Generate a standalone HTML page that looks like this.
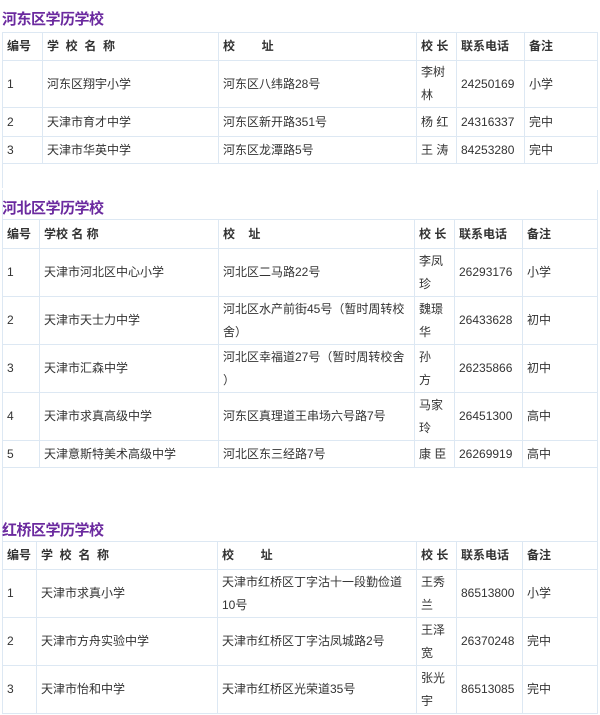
<!DOCTYPE html>
<html><head><meta charset="utf-8"><style>
body{margin:0;width:600px;height:715px;background:#fff;overflow:hidden;position:relative;font-family:"Liberation Sans","Noto Sans CJK SC",sans-serif;color:#333;font-size:12px}
.t{position:absolute;left:2px;font-size:15px;font-weight:bold;color:#6b2a9f;letter-spacing:-0.5px}
table{position:absolute;left:2px;width:596px;border-collapse:collapse;table-layout:fixed}
td{border:1px solid #dde8f3;padding:0 4px;vertical-align:middle;line-height:23px;font-size:12px;white-space:nowrap;overflow:hidden}
tr.h td{font-weight:bold}
.vl{position:absolute;width:1px;background:#dde8f3}
</style></head><body>
<div class="t" style="top:8px">河东区学历学校</div>
<table style="top:32px">
<colgroup><col style="width:40px"><col style="width:176px"><col style="width:198px"><col style="width:40px"><col style="width:68px"><col></colgroup>
<tr class="h" style="height:28px"><td>编号</td><td>学&nbsp; 校&nbsp; 名&nbsp; 称</td><td>校&nbsp; &nbsp; &nbsp; &nbsp; 址</td><td>校 长</td><td>联系电话</td><td>备注</td></tr>
<tr style="height:47px"><td>1</td><td>河东区翔宇小学</td><td>河东区八纬路28号</td><td>李树<br>林</td><td>24250169</td><td>小学</td></tr>
<tr style="height:29px"><td>2</td><td>天津市育才中学</td><td>河东区新开路351号</td><td>杨 红</td><td>24316337</td><td>完中</td></tr>
<tr style="height:27px"><td>3</td><td>天津市华英中学</td><td>河东区龙潭路5号</td><td>王 涛</td><td>84253280</td><td>完中</td></tr>
</table>
<div class="vl" style="left:2px;top:163px;height:25px"></div>
<div class="t" style="top:197px">河北区学历学校</div>
<div class="vl" style="left:2px;top:190px;height:30px"></div>
<div class="vl" style="left:597px;top:190px;height:30px"></div>
<table style="top:219px">
<colgroup><col style="width:37px"><col style="width:179px"><col style="width:196px"><col style="width:40px"><col style="width:68px"><col></colgroup>
<tr class="h" style="height:29px"><td>编号</td><td>学校 名 称</td><td>校&nbsp; &nbsp; 址</td><td>校 长</td><td>联系电话</td><td>备注</td></tr>
<tr style="height:48px"><td>1</td><td>天津市河北区中心小学</td><td>河北区二马路22号</td><td>李凤<br>珍</td><td>26293176</td><td>小学</td></tr>
<tr style="height:48px"><td>2</td><td>天津市天士力中学</td><td>河北区水产前街45号（暂时周转校<br>舍）</td><td>魏璟<br>华</td><td>26433628</td><td>初中</td></tr>
<tr style="height:48px"><td>3</td><td>天津市汇森中学</td><td>河北区幸福道27号（暂时周转校舍<br>）</td><td>孙<br>方</td><td>26235866</td><td>初中</td></tr>
<tr style="height:48px"><td>4</td><td>天津市求真高级中学</td><td>河东区真理道王串场六号路7号</td><td>马家<br>玲</td><td>26451300</td><td>高中</td></tr>
<tr style="height:27px"><td>5</td><td>天津意斯特美术高级中学</td><td>河北区东三经路7号</td><td>康 臣</td><td>26269919</td><td>高中</td></tr>
</table>
<div class="vl" style="left:2px;top:466px;height:75px"></div>
<div class="vl" style="left:597px;top:466px;height:75px"></div>
<div class="t" style="top:519px">红桥区学历学校</div>
<table style="top:541px">
<colgroup><col style="width:34px"><col style="width:181px"><col style="width:199px"><col style="width:40px"><col style="width:66px"><col></colgroup>
<tr class="h" style="height:28px"><td>编号</td><td>学&nbsp; 校&nbsp; 名&nbsp; 称</td><td>校&nbsp; &nbsp; &nbsp; &nbsp; 址</td><td>校 长</td><td>联系电话</td><td>备注</td></tr>
<tr style="height:48px"><td>1</td><td>天津市求真小学</td><td>天津市红桥区丁字沽十一段勤俭道<br>10号</td><td>王秀<br>兰</td><td>86513800</td><td>小学</td></tr>
<tr style="height:48px"><td>2</td><td>天津市方舟实验中学</td><td>天津市红桥区丁字沽凤城路2号</td><td>王泽<br>宽</td><td>26370248</td><td>完中</td></tr>
<tr style="height:48px"><td>3</td><td>天津市怡和中学</td><td>天津市红桥区光荣道35号</td><td>张光<br>宇</td><td>86513085</td><td>完中</td></tr>
</table>
</body></html>
